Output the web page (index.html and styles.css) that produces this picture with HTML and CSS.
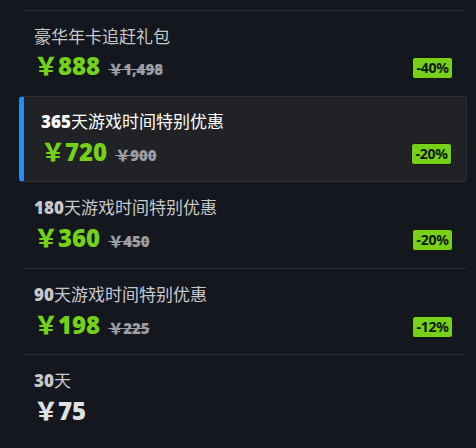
FILE: index.html
```html
<!DOCTYPE html>
<html lang="zh">
<head>
<meta charset="utf-8">
<link rel="stylesheet" href="styles.css">
</head>
<body>
<div class="list">
  <div class="item">
    <div class="title">豪华年卡追赶礼包</div>
    <div class="row">
      <div class="prices"><span class="price">￥888</span><span class="orig">￥1,498</span></div>
      <span class="badge">-40%</span>
    </div>
  </div>
  <div class="item selected">
    <div class="title"><b>365</b>天游戏时间特别优惠</div>
    <div class="row">
      <div class="prices"><span class="price">￥720</span><span class="orig">￥900</span></div>
      <span class="badge">-20%</span>
    </div>
  </div>
  <div class="item">
    <div class="title"><b>180</b>天游戏时间特别优惠</div>
    <div class="row">
      <div class="prices"><span class="price">￥360</span><span class="orig">￥450</span></div>
      <span class="badge">-20%</span>
    </div>
  </div>
  <div class="item">
    <div class="title"><b>90</b>天游戏时间特别优惠</div>
    <div class="row">
      <div class="prices"><span class="price">￥198</span><span class="orig">￥225</span></div>
      <span class="badge">-12%</span>
    </div>
  </div>
  <div class="item">
    <div class="title"><b>30</b>天</div>
    <div class="row">
      <div class="prices"><span class="price plain">￥75</span></div>
    </div>
  </div>
</div>
</body>
</html>
```
FILE: styles.css
```css
html, body {
  margin: 0;
  padding: 0;
  background: #15171e;
  width: 476px;
  height: 448px;
  overflow: hidden;
}
body {
  font-family: "Open Sans", "Noto Sans CJK SC", sans-serif;
  color: #c6c8cc;
}
.list {
  padding-top: 10px;
  margin-left: 23px;
  width: 443px;
}
.item {
  box-sizing: border-box;
  height: 86px;
  border-top: 1px solid #2a2d34;
  padding: 14px 13px 0 11px;
}
.item.selected {
  margin-left: -4px;
  margin-right: -1px;
  background: #212226;
  border: 1px solid #2e2f34;
  border-left: 5px solid #1a8fff;
  border-radius: 4px;
  padding: 13px 14px 0 17px;
}
.item.selected + .item {
  border-top: none;
}
.title {
  font-family: "Noto Sans CJK SC", sans-serif;
  font-size: 17px;
  line-height: 22px;
  color: #c6c8cc;
}
.title b {
  font-family: "Open Sans", sans-serif;
  font-weight: 800;
  font-size: 17px;
}
.selected .title {
  color: #ffffff;
}
.row {
  display: flex;
  align-items: center;
  justify-content: space-between;
  margin-top: 4px;
  height: 30px;
}
.prices {
  display: flex;
  align-items: baseline;
}
.price {
  font-family: "Open Sans", "Noto Sans CJK SC", sans-serif;
  font-weight: 800;
  font-size: 24px;
  line-height: 30px;
  color: #74d11a;
}
.price.plain {
  color: #dfe1e3;
}
.orig {
  font-family: "Open Sans", "Noto Sans CJK SC", sans-serif;
  font-weight: 800;
  font-size: 15px;
  color: #9b9ea3;
  text-decoration: line-through;
  margin-left: 8px;
}
.badge {
  box-sizing: border-box;
  width: 41px;
  height: 22px;
  margin-top: 4px;
  background: #77d01a;
  border: 1px solid #0e1a05;
  border-radius: 3px;
  color: #0c1800;
  font-family: "Noto Sans", sans-serif;
  font-weight: 700;
  font-size: 14px;
  line-height: 20px;
  text-align: center;
  letter-spacing: -0.3px;
}
```
